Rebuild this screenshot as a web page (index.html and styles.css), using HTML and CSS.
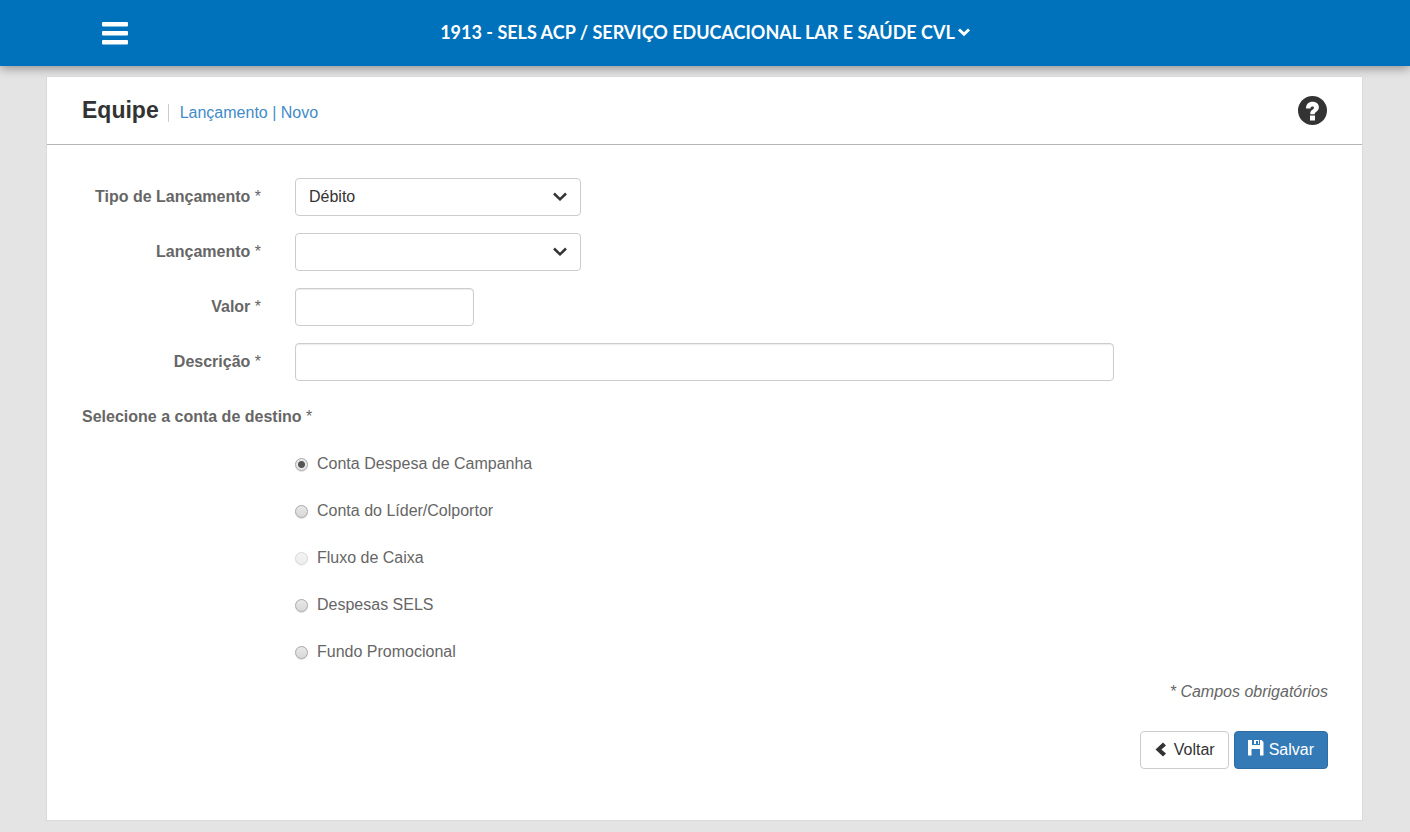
FILE: index.html
```html
<!DOCTYPE html>
<html lang="pt-BR">
<head>
<meta charset="utf-8">
<meta name="viewport" content="width=device-width, initial-scale=1">
<title>Equipe - Lançamento</title>
<link rel="stylesheet" href="styles.css">
</head>
<body>
<header class="topbar">
  <button type="button" class="menu-button" aria-label="Menu">
    <svg width="26" height="24" viewBox="0 0 26 24" aria-hidden="true"><rect y="1" width="26" height="4.5" rx="1"/><rect y="10" width="26" height="4.5" rx="1"/><rect y="19" width="26" height="4.5" rx="1"/></svg>
  </button>
  <button type="button" class="unit-button">1913 - SELS ACP / SERVIÇO EDUCACIONAL LAR E SAÚDE CVL
    <svg width="12" height="9" viewBox="0 0 12 9" aria-hidden="true"><path d="M0 2.5 2 .5 6 4.200 10 .5 12 2.500 6 8.300Z"/></svg>
  </button>
</header>

<main class="card">
  <div class="card-head">
    <h1 class="title">Equipe</h1>
    <nav class="crumbs"><a href="#">Lançamento | Novo</a></nav>
    <button type="button" class="help-button" aria-label="Ajuda">
      <svg width="29" height="29" viewBox="0 0 29 29" aria-hidden="true"><circle cx="14.500" cy="14.500" r="14.500"/><path class="mark" d="M8 12.500C8 8.300 10.500 5.700 14.600 5.700 18.300 5.700 20.900 7.900 20.900 11.100 20.900 13.600 19.600 14.800 18.100 15.900 17 16.700 16.700 17.200 16.700 18.200H12.200C12.200 15.900 12.800 14.800 14.400 13.700 15.500 13 15.900 12.500 15.900 11.700 15.900 10.900 15.300 10.400 14.300 10.400 13.200 10.400 12.500 11.100 12.500 12.500ZM12 19.500H17V24.500H12Z"/></svg>
    </button>
  </div>

  <form class="form">
    <div class="row">
      <label class="label" for="tipo">Tipo de Lançamento <span class="req">*</span></label>
      <div class="select-wrap">
        <select class="control" id="tipo"><option>Débito</option><option>Crédito</option></select>
        <svg class="chevron" width="14" height="9" viewBox="0 0 14 9" aria-hidden="true"><path d="M1 1.500 7 7.300 13 1.500"/></svg>
      </div>
    </div>
    <div class="row">
      <label class="label" for="lancamento">Lançamento <span class="req">*</span></label>
      <div class="select-wrap">
        <select class="control" id="lancamento"><option></option></select>
        <svg class="chevron" width="14" height="9" viewBox="0 0 14 9" aria-hidden="true"><path d="M1 1.500 7 7.300 13 1.500"/></svg>
      </div>
    </div>
    <div class="row">
      <label class="label" for="valor">Valor <span class="req">*</span></label>
      <input class="control text short" type="text" id="valor">
    </div>
    <div class="row">
      <label class="label" for="descricao">Descrição <span class="req">*</span></label>
      <input class="control text long" type="text" id="descricao">
    </div>

    <fieldset class="accounts">
      <legend class="legend">Selecione a conta de destino <span class="req">*</span></legend>
      <div class="options">
        <label class="option"><input class="radio" type="radio" name="conta" checked>Conta Despesa de Campanha</label>
        <label class="option"><input class="radio" type="radio" name="conta">Conta do Líder/Colportor</label>
        <label class="option"><input class="radio" type="radio" name="conta" disabled>Fluxo de Caixa</label>
        <label class="option"><input class="radio" type="radio" name="conta">Despesas SELS</label>
        <label class="option"><input class="radio" type="radio" name="conta">Fundo Promocional</label>
      </div>
    </fieldset>

    <p class="note">* Campos obrigatórios</p>

    <div class="actions">
      <button type="button" class="btn">
        <svg width="12" height="16" viewBox="0 0 12 16" aria-hidden="true"><path d="M8 .5 11 3.500 6.400 7.500 11 11.500 8 14.500.5 7.500Z"/></svg>Voltar
      </button>
      <button type="submit" class="btn primary">
        <svg class="disk" width="16" height="16" viewBox="0 0 16 16" aria-hidden="true"><path d="M0 0H4V5H12V0H13.500L15.500 2V15.500H12V9H3.500V15.500H0ZM6 0H11V4H10V1H8V4H6Z"/></svg>Salvar
      </button>
    </div>
  </form>
</main>
</body>
</html>
```
FILE: styles.css
```css
* { box-sizing: border-box; }

body {
  margin: 0;
  background: #e4e4e4;
  color: #666;
  font: 16px/24px "Liberation Sans", Arial, sans-serif;
}

button, input, select { font: inherit; }

button { cursor: pointer; }

.topbar {
  display: grid;
  grid-template-columns: 1fr auto 1fr;
  align-items: center;
  height: 66px;
  padding: 0 102px;
  background: #0072bc;
  box-shadow: 0 2px 10px rgba(0, 0, 0, 0.4);
}

.menu-button, .unit-button, .help-button {
  padding: 0;
  border: 0;
  background: none;
}

.menu-button {
  justify-self: start;
  height: 24px;
  fill: #fff;
}

.menu-button svg, .help-button svg { display: block; }

.unit-button {
  display: flex;
  align-items: center;
  gap: 3px;
  padding-bottom: 2px;
  color: #fff;
  fill: #fff;
  font: bold 18px/24px Lato, sans-serif;
}

.card {
  margin: 10px 47px 11px 46px;
  border: 1px solid #dadada;
  background: #fff;
}

.card-head {
  display: flex;
  align-items: center;
  height: 68px;
  padding: 0 35px 1px;
  border-bottom: 1px solid #b5b5b5;
}

.title {
  margin: 0;
  color: #333;
  font-size: 23px;
  line-height: 32px;
}

.crumbs {
  margin: 5px 0 0 9px;
  padding-left: 11px;
  border-left: 1px solid #ccc;
  line-height: 18px;
}

.crumbs a {
  color: #428bca;
  text-decoration: none;
}

.help-button {
  margin-left: auto;
  fill: #333;
}

.mark { fill: #fff; }

.form { padding: 33px 34px 51px 35px; }

.row {
  display: grid;
  grid-template-columns: 179px 1fr;
  column-gap: 34px;
  align-items: center;
  margin-bottom: 17px;
}

.label {
  font-weight: bold;
  text-align: right;
}

.req { font-weight: normal; }

.control {
  display: block;
  height: 38px;
  padding: 0 13px;
  border: 1px solid #ccc;
  border-radius: 4px;
  background: #fff;
  color: #333;
}

.select-wrap {
  position: relative;
  width: 286px;
}

.select-wrap .control {
  width: 100%;
  appearance: none;
}

.chevron {
  position: absolute;
  top: 14px;
  right: 14px;
  fill: none;
  stroke: #333;
  stroke-width: 2.5;
  pointer-events: none;
}

.text { box-shadow: inset 0 1px 1px rgba(0, 0, 0, 0.08); }

.short { width: 179px; }

.long { margin-right: 214px; }

.accounts {
  min-width: 0;
  margin: 0;
  padding: 0;
  border: 0;
}

.legend {
  padding: 0;
  font-weight: bold;
  line-height: 38px;
}

.options {
  margin: 4px 0 0 213px;
}

.option {
  display: flex;
  align-items: center;
  gap: 9px;
  height: 47px;
}

.radio {
  width: 13px;
  height: 13px;
  margin: 1px 0 0;
  border: 1px solid #a8a8a8;
  border-radius: 50%;
  background: linear-gradient(#e8e8e8, #d8d8d8);
  box-shadow: 0 1px 1px rgba(0, 0, 0, 0.12);
  appearance: none;
}

.radio:checked {
  background: radial-gradient(circle, #555 3px, #e8e8e8 4px);
}

.radio:disabled { opacity: 0.45; }

.note {
  margin: 5px 0 27px;
  font-style: italic;
  text-align: right;
}

.actions {
  display: flex;
  justify-content: flex-end;
  gap: 5px;
}

.btn {
  display: flex;
  align-items: center;
  gap: 7px;
  height: 38px;
  padding: 0 13px 0 14px;
  border: 1px solid #ccc;
  border-radius: 4px;
  background: #fff;
  color: #333;
  fill: #333;
}

.primary {
  gap: 5px;
  padding: 0 13px;
  border-color: #2e6da4;
  background: #337ab7;
  color: #fff;
  fill: #fff;
}

.disk { margin-bottom: 4px; }
```
